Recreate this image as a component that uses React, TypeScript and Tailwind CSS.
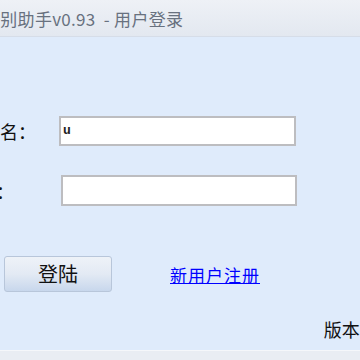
import React from "react";

const cjk = { fontFamily: '"Noto Sans CJK SC", "Noto Sans", sans-serif' };

export default function App() {
  return (
    <div className="w-[360px] h-[360px] overflow-hidden flex flex-col bg-[#dfeafa]" style={cjk}>
      <div className="h-[37px] shrink-0 flex items-center bg-gradient-to-b from-[#eef1f6] to-[#e3e8f0] border-b border-[#d6dde8] overflow-hidden">
        <span className="ml-[-17px] text-[17px] leading-none text-[#68717f] whitespace-pre tracking-[0.3px]">
          {"识别助手v0.93  - 用户登录"}
        </span>
      </div>
      <div className="flex-1 flex flex-col bg-[#dfebfb] overflow-hidden">
        <div className="mt-[79px] flex items-center h-[30px]">
          <span className="ml-[-36px] w-[95px] shrink-0 text-[18px] leading-none text-[#111]">用户名：</span>
          <div className="w-[237px] h-[30px] shrink-0 bg-white border-2 border-[#bdbdc0] flex items-center px-[2px]">
            <span className="text-[13px] font-bold text-[#222]" style={{ fontFamily: '"Liberation Mono", monospace' }}>u</span>
          </div>
        </div>
        <div className="mt-[29px] flex items-center h-[31px]">
          <span className="ml-[-40px] w-[101px] shrink-0 text-[18px] leading-none text-[#111]">密码：</span>
          <div className="w-[236px] h-[31px] shrink-0 bg-white border-2 border-[#bdbdc0]" />
        </div>
        <div className="mt-[50px] flex items-center">
          <button className="ml-[4px] w-[108px] h-[36px] rounded-[3px] border border-[#b8c6da] bg-gradient-to-b from-[#eef2f8] via-[#e3eaf4] to-[#c8d7ec] text-[20px] leading-none text-[#111]">
            登陆
          </button>
          <a href="#" className="ml-[58px] text-[17px] leading-none text-[#0000ff] underline tracking-[1px]">
            新用户注册
          </a>
        </div>
        <div className="mt-[28px] flex justify-end overflow-hidden h-[24px]">
          <span className="mr-[-62px] text-[18px] leading-none text-[#111] whitespace-nowrap">版本：v0.93</span>
        </div>
        <div className="mt-auto h-[10px] bg-[#e9edf3] border-t border-[#f5f7fa]" />
      </div>
    </div>
  );
}
